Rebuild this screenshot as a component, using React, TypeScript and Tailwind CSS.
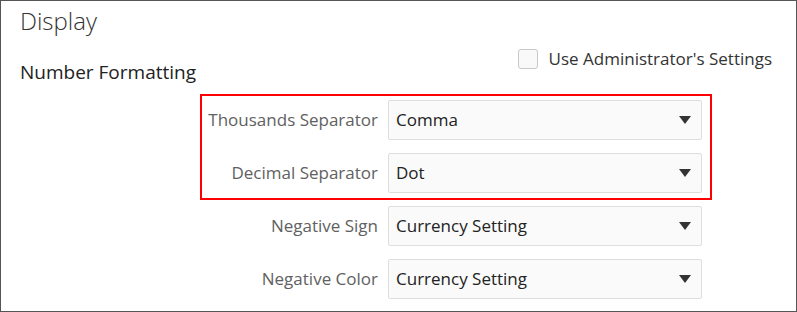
function Caret() {
  return (
    <svg width="12" height="8" viewBox="0 0 12 8" className="shrink-0">
      <path d="M0 0h12L6 8z" fill="#333" />
    </svg>
  )
}

function Field({ label, value }: { label: string; value: string }) {
  return (
    <div className="flex items-center justify-end gap-[10px]">
      <span className="text-[17px] text-[#616161]">{label}</span>
      <div className="flex h-[40px] w-[314px] items-center justify-between rounded-[2px] border border-[#dedede] bg-[#fafafa] pl-[7px] pr-[10px]">
        <span className="text-[17px] text-[#222]">{value}</span>
        <Caret />
      </div>
    </div>
  )
}

export default function App() {
  return (
    <div
      className="relative h-[312px] w-[797px] overflow-hidden border border-[#555] bg-white"
      style={{ fontFamily: '"Open Sans", "Noto Sans", sans-serif' }}
    >
      <div className="flex items-start justify-between pl-[19px] pr-[24px]">
        <div className="flex flex-col">
          <h1 className="mt-[4px] text-[24px] font-light leading-[32px] text-[#333]">Display</h1>
          <h2 className="mt-[23px] text-[19px] leading-[24px] text-[#222]">Number Formatting</h2>
        </div>
        <label className="mt-[45px] flex items-center gap-[11px]">
          <span className="h-[20px] w-[20px] rounded-[3px] border border-[#c8c8c8] bg-[#f9f9f9]" />
          <span className="text-[17px] text-[#333]">Use Administrator's Settings</span>
        </label>
      </div>

      <div className="ml-[199px] mt-[10px] flex w-[512px] flex-col">
        <div className="flex flex-col gap-[13px] border-2 border-[#f00] pb-[5px] pr-[8px] pt-[4px]">
          <Field label="Thousands Separator" value="Comma" />
          <Field label="Decimal Separator" value="Dot" />
        </div>
        <div className="mt-[6px] flex flex-col gap-[13px] pr-[10px]">
          <Field label="Negative Sign" value="Currency Setting" />
          <Field label="Negative Color" value="Currency Setting" />
        </div>
      </div>
    </div>
  )
}
